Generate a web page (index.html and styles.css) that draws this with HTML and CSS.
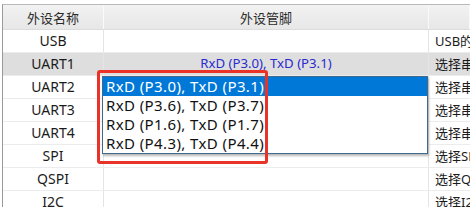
FILE: index.html
```html
<!DOCTYPE html>
<html>
<head>
<meta charset="utf-8">
<link rel="stylesheet" href="styles.css">
</head>
<body>
<div class="grid">
  <div class="row head">
    <div class="cell c1">外设名称</div>
    <div class="cell c2">外设管脚</div>
    <div class="cell c3"></div>
  </div>
  <div class="row">
    <div class="cell c1">USB</div>
    <div class="cell c2"></div>
    <div class="cell c3">USB的管脚固定</div>
  </div>
  <div class="row sel">
    <div class="cell c1">UART1</div>
    <div class="cell c2 pin">RxD (P3.0), TxD (P3.1)</div>
    <div class="cell c3">选择串口1的管脚</div>
  </div>
  <div class="row">
    <div class="cell c1">UART2</div>
    <div class="cell c2"></div>
    <div class="cell c3">选择串口2的管脚</div>
  </div>
  <div class="row">
    <div class="cell c1">UART3</div>
    <div class="cell c2"></div>
    <div class="cell c3">选择串口3的管脚</div>
  </div>
  <div class="row">
    <div class="cell c1">UART4</div>
    <div class="cell c2"></div>
    <div class="cell c3">选择串口4的管脚</div>
  </div>
  <div class="row">
    <div class="cell c1">SPI</div>
    <div class="cell c2"></div>
    <div class="cell c3">选择SPI的管脚</div>
  </div>
  <div class="row">
    <div class="cell c1">QSPI</div>
    <div class="cell c2"></div>
    <div class="cell c3">选择QSPI的管脚</div>
  </div>
  <div class="row">
    <div class="cell c1">I2C</div>
    <div class="cell c2"></div>
    <div class="cell c3">选择I2C的管脚</div>
  </div>

  <ul class="dropdown">
    <li class="opt active">RxD (P3.0), TxD (P3.1)</li>
    <li class="opt">RxD (P3.6), TxD (P3.7)</li>
    <li class="opt">RxD (P1.6), TxD (P1.7)</li>
    <li class="opt">RxD (P4.3), TxD (P4.4)</li>
  </ul>
  <div class="highlight"></div>
</div>
</body>
</html>
```

FILE: styles.css
```css
html, body {
  margin: 0;
  padding: 0;
  background: #ffffff;
  overflow: hidden;
}
body {
  width: 470px;
  height: 207px;
  padding-top: 4px;
  padding-left: 2px;
  box-sizing: border-box;
  font-family: "Noto Sans", "Noto Sans CJK SC", sans-serif;
  font-size: 14px;
  color: #1b1b1b;
}
.grid {
  position: relative;
  border-top: 1px solid #b9b9b9;
  border-left: 1px solid #9a9a9a;
}
.row {
  display: grid;
  grid-template-columns: 101px 325px 1fr;
  height: 23px;
  border-bottom: 1px solid #ececec;
  box-sizing: border-box;
}
.row.head {
  height: 25px;
  background: linear-gradient(#f2f2f2, #e7e7e7);
  border-bottom: 1px solid #dcdcdc;
}
.row.sel {
  background: #dedede;
}
.cell {
  display: flex;
  align-items: center;
  justify-content: center;
  border-right: 1px solid #e4e4e4;
  white-space: nowrap;
  overflow: hidden;
  line-height: 1;
}
.head .cell {
  border-right: 1px solid #fafafa;
  color: #2a2a2a;
  font-family: "Noto Sans CJK SC", sans-serif;
  font-size: 13px;
}
.c3 {
  justify-content: flex-start;
  padding-left: 6px;
  border-right: none;
  font-size: 13px;
  font-family: "Noto Sans", "Noto Sans CJK SC", sans-serif;
}
.pin {
  color: #2a2ad0;
  font-size: 13.2px;
}
.dropdown {
  position: absolute;
  left: 99px;
  top: 71px;
  width: 326px;
  margin: 0;
  padding: 0;
  list-style: none;
  background: #ffffff;
  border: 1px solid #3f6a8e;
  box-shadow: 1px 2px 2px rgba(0, 0, 0, 0.28);
  box-sizing: border-box;
}
.opt {
  height: 19px;
  line-height: 19px;
  padding-left: 3px;
  font-size: 15px;
  letter-spacing: 0.4px;
  color: #111;
  white-space: nowrap;
}
.opt.active {
  background: #0078d7;
  color: #ffffff;
}
.highlight {
  position: absolute;
  left: 94px;
  top: 65px;
  width: 171px;
  height: 94px;
  border: 3px solid #ea3328;
  border-radius: 3px;
  box-sizing: border-box;
}
```
